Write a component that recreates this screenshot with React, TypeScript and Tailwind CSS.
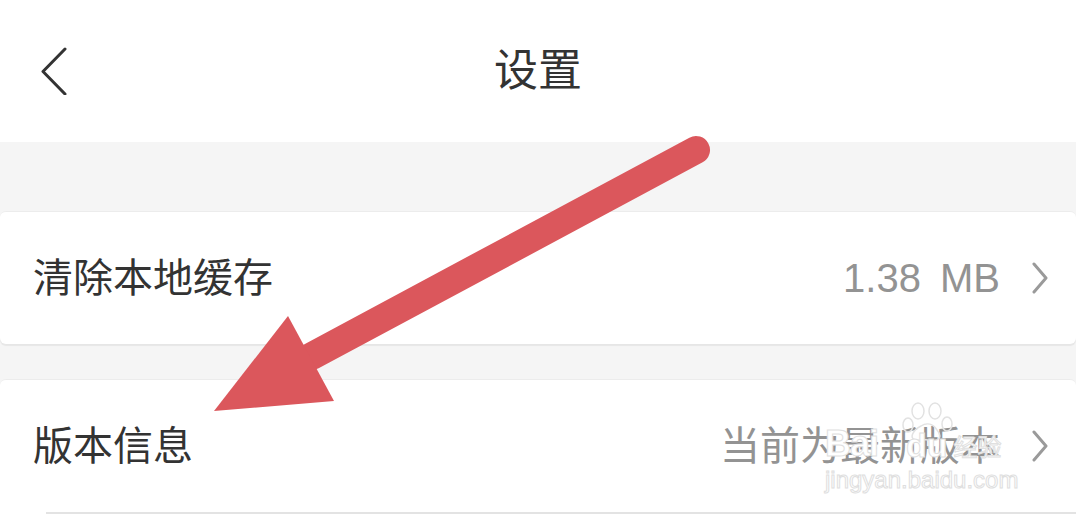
import React from 'react';

const font = 'font-["Liberation_Sans","Noto_Sans_CJK_SC",sans-serif]';

function Chevron() {
  return (
    <svg width="16" height="32" viewBox="0 0 16 32" fill="none">
      <path d="M2 2 L14 16 L2 30" stroke="#9a9a9a" strokeWidth="3" strokeLinecap="round" strokeLinejoin="round" />
    </svg>
  );
}

function Row({ label, value, spaced }: { label: string; value: string; spaced?: boolean }) {
  return (
    <div className="flex h-[132px] items-center pl-[33px] pr-[28px]">
      <span className="flex-1 text-[40px] leading-none text-[#333333]">{label}</span>
      <span className={`text-[40px] leading-none text-[#939393] ${spaced ? '[word-spacing:8px]' : ''}`}>{value}</span>
      <span className="ml-[32px] flex items-center">
        <Chevron />
      </span>
    </div>
  );
}

// faint baidu jingyan watermark over the bottom-right corner
function Watermark() {
  return (
    <div className="pointer-events-none absolute left-[825px] top-[402px] h-[92px] w-[194px]">
      <svg className="absolute left-[76px] top-0" width="54" height="40" viewBox="0 0 54 40" fill="none" stroke="#e2e2e2" strokeWidth="1.5">
        <ellipse cx="17" cy="9" rx="6" ry="8" />
        <ellipse cx="34" cy="9" rx="6" ry="8" />
        <ellipse cx="7" cy="23" rx="5" ry="7" />
        <ellipse cx="46" cy="22" rx="5" ry="7" />
        <path d="M14 38 C8 36 12 28 20 24 C26 20 32 22 36 28 C42 35 38 40 28 38 C22 37 19 39 14 38 Z" />
      </svg>
      <div className="absolute left-0 top-[24px] flex items-end leading-none text-white [-webkit-text-stroke:1px_#e0e0e0]">
        <span className="text-[36px] font-bold tracking-[-1px]">Bai</span>
        <span className="ml-[28px] text-[34px] font-bold">du</span>
        <span className="ml-[6px] pb-[2px] text-[24px]">经验</span>
      </div>
      <div className="absolute left-0 top-[66px] text-[24px] leading-none text-white [-webkit-text-stroke:1px_#dedede]">
        jingyan.baidu.com
      </div>
    </div>
  );
}

export default function App() {
  return (
    <div className={`relative h-[520px] w-[1076px] overflow-hidden bg-[#f5f5f5] ${font}`}>
      <header className="flex h-[142px] items-center bg-white">
        <div className="flex w-[160px] items-center pl-[40px]">
          <svg width="28" height="48" viewBox="0 0 28 48" fill="none">
            <path d="M25 2 L3 24.5 L25 47" stroke="#333333" strokeWidth="3" strokeLinecap="round" strokeLinejoin="round" />
          </svg>
        </div>
        <h1 className="flex-1 text-center text-[44px] leading-none text-[#333333]">设置</h1>
        <div className="w-[160px]" />
      </header>

      <div className="pt-[69px]">
        <div className="rounded-[6px] border-t border-[#ececec] bg-white shadow-[0_2px_1px_rgba(0,0,0,0.06)]">
          <Row label="清除本地缓存" value="1.38 MB" spaced />
        </div>

        <div className="mt-[35px] rounded-t-[6px] border-t border-[#ececec] bg-white">
          <Row label="版本信息" value="当前为最新版本" />
          <div className="ml-[46px] h-[2px] bg-[#e3e3e3]" />
          <div className="h-[132px]" />
        </div>
      </div>

      <Watermark />

      <svg className="pointer-events-none absolute left-0 top-0" width="1076" height="520" viewBox="0 0 1076 520">
        <line x1="696" y1="150" x2="312" y2="356" stroke="#db575c" strokeWidth="28" strokeLinecap="round" />
        <polygon points="288,316 334,401 214,411" fill="#db575c" />
      </svg>
    </div>
  );
}
